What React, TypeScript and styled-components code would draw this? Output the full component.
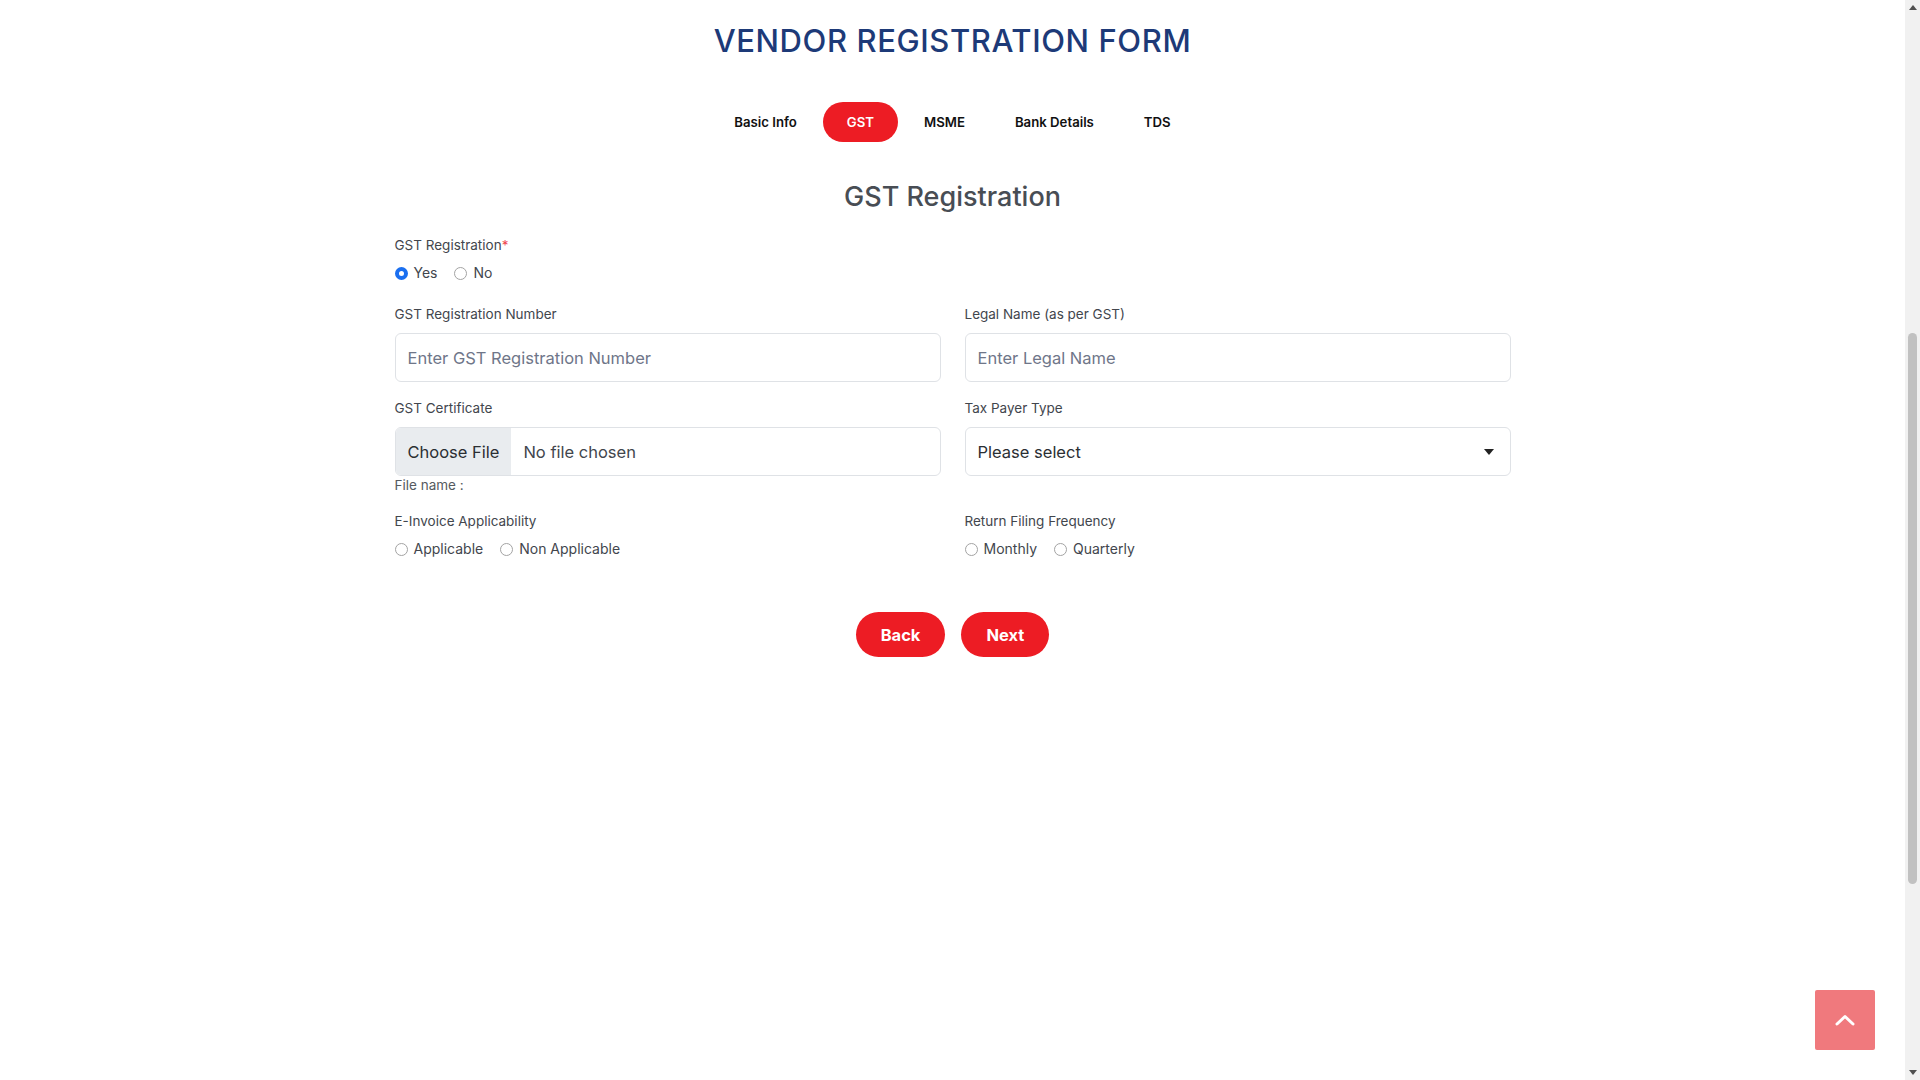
import { useState } from 'react';
import styled, { createGlobalStyle } from 'styled-components';

const GlobalStyle = createGlobalStyle`
  body {
    margin: 0;
    background: #ffffff;
    font-family: Inter, "Noto Sans", Arial, sans-serif;
    color: #212529;
  }
  * {
    box-sizing: border-box;
  }
`;

const tabs = ['Basic Info', 'GST', 'MSME', 'Bank Details', 'TDS'];

const App = () => {
  const [active, setActive] = useState('GST');
  const [gst, setGst] = useState('yes');
  const [invoice, setInvoice] = useState('');
  const [frequency, setFrequency] = useState('');

  return (
    <Page>
      <GlobalStyle />
      <Title>VENDOR REGISTRATION FORM</Title>

      <TabBar>
        {tabs.map((t) => (
          <Tab key={t} $active={t === active} onClick={() => setActive(t)}>
            {t}
          </Tab>
        ))}
      </TabBar>

      <SectionTitle>GST Registration</SectionTitle>

      <Container>
        <FieldBlock>
          <Label>
            GST Registration<Required>*</Required>
          </Label>
          <RadioGroup>
            <RadioOption>
              <Radio name='gst' checked={gst === 'yes'} onChange={() => setGst('yes')} />
              Yes
            </RadioOption>
            <RadioOption>
              <Radio name='gst' checked={gst === 'no'} onChange={() => setGst('no')} />
              No
            </RadioOption>
          </RadioGroup>
        </FieldBlock>

        <Grid>
          <Field>
            <Label>GST Registration Number</Label>
            <TextInput placeholder='Enter GST Registration Number' />
          </Field>
          <Field>
            <Label>Legal Name (as per GST)</Label>
            <TextInput placeholder='Enter Legal Name' />
          </Field>

          <Field>
            <Label>GST Certificate</Label>
            <FileBox>
              <FileButton>Choose File</FileButton>
              <FileText>No file chosen</FileText>
            </FileBox>
            <FileName>File name :</FileName>
          </Field>
          <Field>
            <Label>Tax Payer Type</Label>
            <SelectWrap>
              <Select defaultValue=''>
                <option value=''>Please select</option>
                <option value='regular'>Regular</option>
                <option value='composition'>Composition</option>
              </Select>
              <Caret />
            </SelectWrap>
          </Field>

          <Field>
            <Label>E-Invoice Applicability</Label>
            <RadioGroup>
              <RadioOption>
                <Radio name='invoice' checked={invoice === 'a'} onChange={() => setInvoice('a')} />
                Applicable
              </RadioOption>
              <RadioOption>
                <Radio name='invoice' checked={invoice === 'n'} onChange={() => setInvoice('n')} />
                Non Applicable
              </RadioOption>
            </RadioGroup>
          </Field>
          <Field>
            <Label>Return Filing Frequency</Label>
            <RadioGroup>
              <RadioOption>
                <Radio name='freq' checked={frequency === 'm'} onChange={() => setFrequency('m')} />
                Monthly
              </RadioOption>
              <RadioOption>
                <Radio name='freq' checked={frequency === 'q'} onChange={() => setFrequency('q')} />
                Quarterly
              </RadioOption>
            </RadioGroup>
          </Field>
        </Grid>

        <Actions>
          <ActionButton>Back</ActionButton>
          <ActionButton>Next</ActionButton>
        </Actions>
      </Container>

      <ScrollTop aria-label='Scroll to top'>
        <svg width='20' height='12' viewBox='0 0 20 12' fill='none'>
          <polyline points='2,10 10,2.5 18,10' stroke='#ffffff' strokeWidth='3' strokeLinecap='round' strokeLinejoin='round' />
        </svg>
      </ScrollTop>

      {/* browser window scrollbar, as seen in the capture */}
      <ScrollRail>
        <ArrowUp />
        <Thumb />
        <ArrowDown />
      </ScrollRail>
    </Page>
  );
};

export default App;

const Page = styled.div`
  margin-right: 15px;
  padding-top: 22px;
  padding-bottom: 40px;
`;

const Title = styled.h1`
  margin: 0;
  text-align: center;
  font-family: Inter, "Open Sans", sans-serif;
  font-size: 31px;
  line-height: 38px;
  font-weight: 500;
  letter-spacing: 0.6px;
  color: #1d3a78;
`;

const TabBar = styled.div`
  display: flex;
  justify-content: center;
  gap: 2px;
  margin-top: 42px;
`;

const Tab = styled.button<{ $active: boolean }>`
  height: 40px;
  padding: 0 24px;
  border: none;
  border-radius: 20px;
  background: ${(p) => (p.$active ? '#ed1c24' : 'transparent')};
  color: ${(p) => (p.$active ? '#ffffff' : '#111111')};
  font-family: Inter, sans-serif;
  font-size: 13.2px;
  font-weight: 600;
  cursor: pointer;
`;

const SectionTitle = styled.h2`
  margin: 38px 0 0;
  text-align: center;
  font-size: 27px;
  line-height: 34px;
  font-weight: 500;
  color: #484d54;
`;

const Container = styled.div`
  max-width: 1140px;
  margin: 0 auto;
  padding: 0 12px;
`;

const FieldBlock = styled.div`
  margin-top: 21px;
`;

const Label = styled.div`
  font-size: 13.5px;
  line-height: 21px;
  color: #42464d;
  margin-bottom: 8px;
`;

const Required = styled.span`
  color: #f0484e;
`;

const RadioGroup = styled.div`
  display: flex;
  align-items: center;
  gap: 17px;
  height: 17px;
`;

const RadioOption = styled.label`
  display: inline-flex;
  align-items: center;
  gap: 6px;
  font-size: 14px;
  color: #42464d;
  cursor: pointer;
`;

const Radio = styled.input.attrs({ type: 'radio' })`
  appearance: none;
  width: 13px;
  height: 13px;
  margin: 2px 0 0;
  border-radius: 50%;
  border: 1px solid #a3a3a3;
  background: #ffffff;
  cursor: pointer;
  &:checked {
    border: 4px solid #1a6ff0;
  }
`;

const Grid = styled.div`
  display: grid;
  grid-template-columns: 1fr 1fr;
  column-gap: 24px;
  row-gap: 16px;
  margin-top: 23px;
`;

const Field = styled.div`
  display: flex;
  flex-direction: column;
`;

const TextInput = styled.input`
  height: 49px;
  padding: 0 12px;
  border: 1px solid #dfe2e6;
  border-radius: 6px;
  font-family: Inter, sans-serif;
  font-size: 16.5px;
  color: #212529;
  outline: none;
  &::placeholder {
    color: #6f7689;
  }
`;

const FileBox = styled.div`
  display: flex;
  align-items: stretch;
  height: 49px;
  border: 1px solid #dfe2e6;
  border-radius: 6px;
  overflow: hidden;
`;

const FileButton = styled.button`
  padding: 0 12px;
  border: none;
  background: #e9ecef;
  font-family: Inter, sans-serif;
  font-size: 16.5px;
  color: #2b2f33;
  cursor: pointer;
`;

const FileText = styled.span`
  display: flex;
  align-items: center;
  padding-left: 12px;
  font-size: 16.5px;
  color: #42464d;
`;

const FileName = styled.div`
  margin-bottom: 1px;
  font-size: 13.5px;
  line-height: 18px;
  color: #555a60;
`;

const SelectWrap = styled.div`
  position: relative;
`;

const Select = styled.select`
  width: 100%;
  height: 49px;
  padding: 0 40px 0 12px;
  appearance: none;
  border: 1px solid #dfe2e6;
  border-radius: 6px;
  background: #ffffff;
  font-family: Inter, sans-serif;
  font-size: 16.5px;
  color: #2b2f33;
  outline: none;
`;

const Caret = styled.span`
  position: absolute;
  right: 17px;
  top: 50%;
  margin-top: -3px;
  width: 0;
  height: 0;
  border-left: 5px solid transparent;
  border-right: 5px solid transparent;
  border-top: 6px solid #222222;
  pointer-events: none;
`;

const Actions = styled.div`
  display: flex;
  justify-content: center;
  gap: 16px;
  margin-top: 55px;
`;

const ActionButton = styled.button`
  height: 45px;
  padding: 0 25px;
  border: none;
  border-radius: 23px;
  background: #ed1c24;
  color: #ffffff;
  font-family: Inter, sans-serif;
  font-size: 16.5px;
  font-weight: 700;
  cursor: pointer;
`;

const ScrollTop = styled.button`
  position: fixed;
  right: 45px;
  bottom: 30px;
  width: 60px;
  height: 60px;
  display: flex;
  align-items: center;
  justify-content: center;
  border: none;
  border-radius: 2px;
  background: #f0797d;
  cursor: pointer;
`;

const ScrollRail = styled.div`
  position: fixed;
  top: 0;
  right: 0;
  bottom: 0;
  width: 15px;
  display: flex;
  flex-direction: column;
  align-items: center;
  background: #f1f1f1;
`;

const ArrowUp = styled.span`
  margin-top: 5px;
  width: 0;
  height: 0;
  border-left: 4.5px solid transparent;
  border-right: 4.5px solid transparent;
  border-bottom: 5px solid #505050;
`;

const ArrowDown = styled.span`
  margin-top: auto;
  margin-bottom: 5px;
  width: 0;
  height: 0;
  border-left: 4.5px solid transparent;
  border-right: 4.5px solid transparent;
  border-top: 5px solid #505050;
`;

const Thumb = styled.span`
  margin-top: 323px;
  width: 9px;
  height: 551px;
  border-radius: 5px;
  background: #c1c1c1;
`;
